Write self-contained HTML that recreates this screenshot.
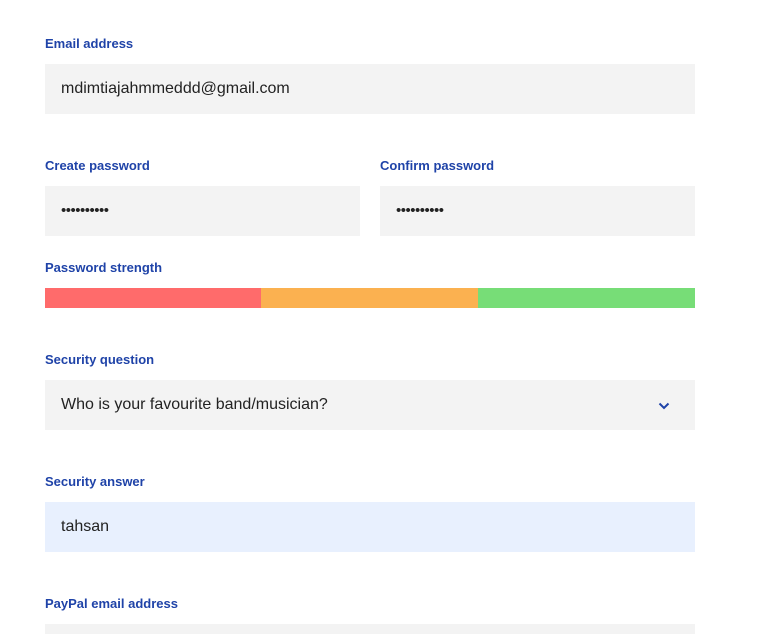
<!DOCTYPE html>
<html style="overflow:hidden;height:634px"><head><style>
body{margin:0;background:#fff;font-family:"Liberation Sans",Arial,sans-serif;width:768px;height:634px;overflow:hidden;position:relative}
.l{position:absolute;left:45px;font-size:13px;font-weight:bold;color:#1f43a8;line-height:15px}
.i{position:absolute;background:#f3f3f3;height:50px;font-size:16px;color:#222;line-height:50px;padding-left:16px;box-sizing:border-box}
.d{font-size:15px;letter-spacing:-0.5px}
</style></head><body>
<div class="l" style="top:36px">Email address</div>
<div class="i" style="left:45px;top:64px;width:650px">mdimtiajahmmeddd@gmail.com</div>
<div class="l" style="top:158px">Create password</div>
<div class="l" style="top:158px;left:380px">Confirm password</div>
<div class="i d" style="left:45px;top:186px;width:315px">••••••••••</div>
<div class="i d" style="left:380px;top:186px;width:315px">••••••••••</div>
<div class="l" style="top:260px">Password strength</div>
<div style="position:absolute;top:288px;left:45px;width:216px;height:20px;background:#ff6b6b"></div>
<div style="position:absolute;top:288px;left:261px;width:217px;height:20px;background:#fbb150"></div>
<div style="position:absolute;top:288px;left:478px;width:217px;height:20px;background:#77dd77"></div>
<div class="l" style="top:352px">Security question</div>
<div class="i" style="left:45px;top:380px;width:650px">Who is your favourite band/musician?
<svg style="position:absolute;left:613px;top:22px" width="12" height="8" viewBox="0 0 12 8"><path d="M1.5 1.5L6 6L10.5 1.5" fill="none" stroke="#1f43a8" stroke-width="2"/></svg></div>
<div class="l" style="top:474px">Security answer</div>
<div class="i" style="left:45px;top:502px;width:650px;background:#e8f0fe">tahsan</div>
<div class="l" style="top:596px">PayPal email address</div>
<div class="i" style="left:45px;top:624px;width:650px;height:10px"></div>
</body></html>
